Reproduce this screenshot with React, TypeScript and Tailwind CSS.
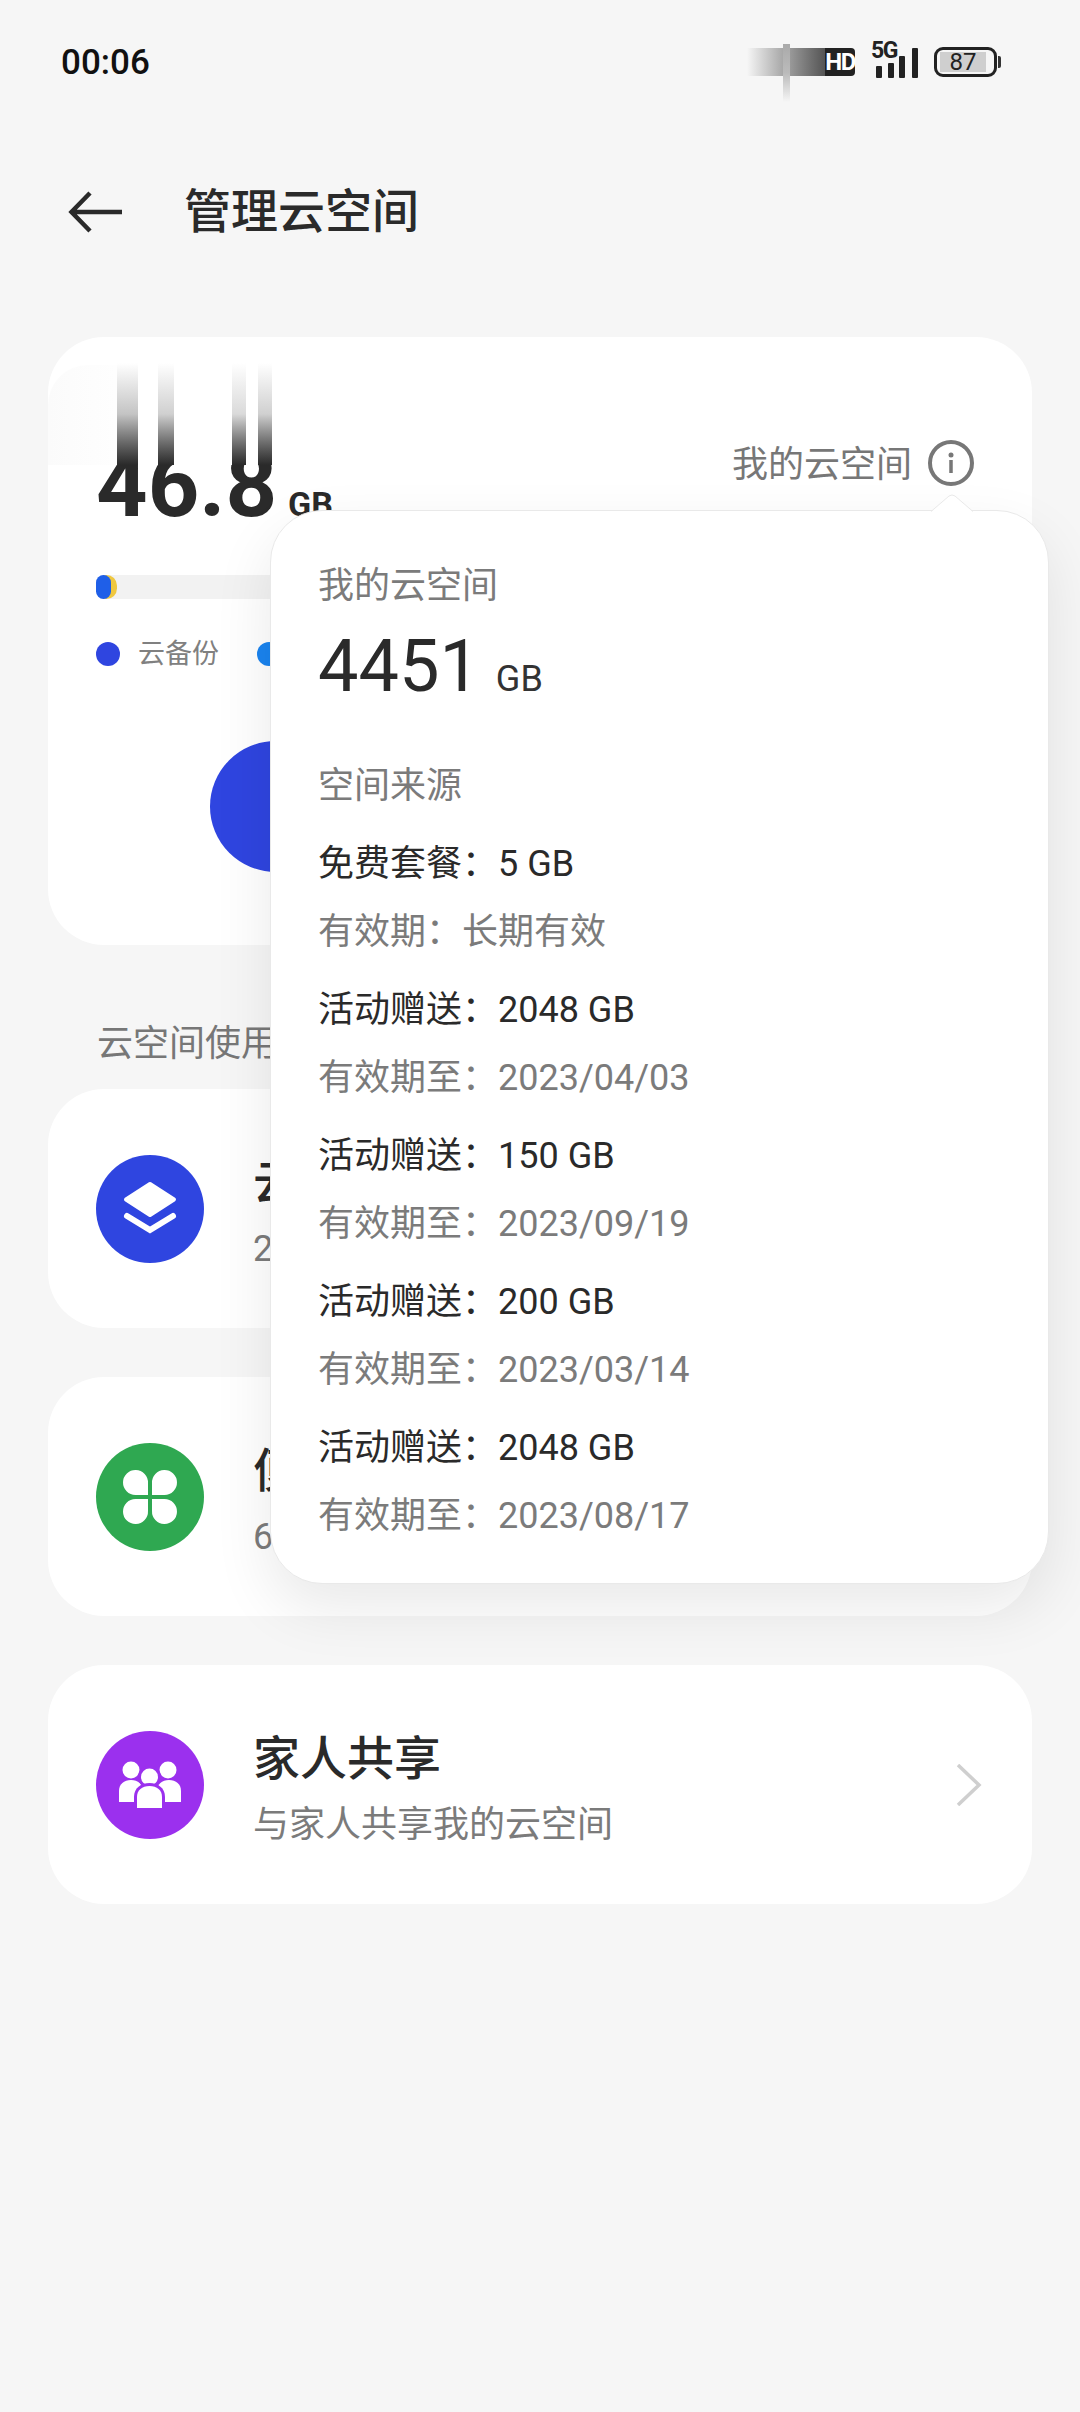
import { ReactNode } from "react";

const grants = [
  { source: "免费套餐：5 GB", expiry: "有效期：长期有效" },
  { source: "活动赠送：2048 GB", expiry: "有效期至：2023/04/03" },
  { source: "活动赠送：150 GB", expiry: "有效期至：2023/09/19" },
  { source: "活动赠送：200 GB", expiry: "有效期至：2023/03/14" },
  { source: "活动赠送：2048 GB", expiry: "有效期至：2023/08/17" },
];

// Smeared digit tops above the 46.8 reading.
const streaks = [
  "left-[69px] w-[21px] via-[#c4c4c4]",
  "left-[110px] w-[16px] via-[#d0d0d0]",
  "left-[184px] w-[14px] via-[#dadada]",
  "left-[210px] w-[14px] via-[#d0d0d0]",
];

function LayersIcon() {
  return (
    <svg viewBox="0 0 108 108" className="size-full">
      <path d="M54 29 L78 44.5 L54 60 L30 44.5 Z" fill="#fff" stroke="#fff" strokeWidth="4" strokeLinejoin="round" />
      <path d="M31 61 L54 75 L77 61" fill="none" stroke="#fff" strokeWidth="6" strokeLinecap="round" strokeLinejoin="miter" />
    </svg>
  );
}

function CloverIcon() {
  return (
    <svg viewBox="0 0 108 108" className="size-full" fill="#fff">
      <path d="M52 40 A12.5 12.5 0 1 0 39.5 52 H52 Z" />
      <path d="M56 40 A12.5 12.5 0 1 1 68.5 52 H56 Z" />
      <path d="M52 68 A12.5 12.5 0 1 1 39.5 56 H52 Z" />
      <path d="M56 68 A12.5 12.5 0 1 0 68.5 56 H56 Z" />
    </svg>
  );
}

function FamilyIcon() {
  return (
    <svg viewBox="0 0 108 108" className="size-full" fill="#fff">
      <circle cx="35" cy="39" r="8.5" />
      <circle cx="72" cy="39" r="8.5" />
      <path d="M23 71 V60 C23 53 28 49 35 49 C42 49 47 53 47 60 V71 Z" />
      <path d="M61 71 V60 C61 53 66 49 73 49 C80 49 85 53 85 60 V71 Z" />
      <circle cx="53.5" cy="46" r="11.5" fill="#9b30ee" />
      <circle cx="53.5" cy="46" r="8.5" />
      <path d="M38 80 V66 C38 57 45 52 53.5 52 C62 52 69 57 69 66 V80 Z" fill="#9b30ee" />
      <path d="M41 77 V66 C41 59 46 55 53.5 55 C61 55 66 59 66 66 V77 Z" />
    </svg>
  );
}

function FeatureCard({
  color,
  icon,
  title,
  subtitle,
}: {
  color: string;
  icon: ReactNode;
  title: string;
  subtitle: string;
}) {
  return (
    <div className="mx-12 flex h-[239px] items-center rounded-[56px] bg-white pr-[50px] pl-12">
      <div className={`size-[108px] shrink-0 rounded-full ${color}`}>{icon}</div>
      <div className="ml-[49px] flex-1 pt-[9px]">
        <div className="text-[47px] leading-[60px] font-medium text-[#2a2a2a]">{title}</div>
        <div className="mt-[11px] text-[36px] leading-[50px] text-[#7b7b7b]">{subtitle}</div>
      </div>
      <svg viewBox="0 0 26 42" className="h-[42px] w-[26px]" fill="none" stroke="#cfcfcf" strokeWidth="3.5">
        <path d="M2 1 L23 21 L2 41" />
      </svg>
    </div>
  );
}

function StatusBar() {
  return (
    <div className="relative flex h-[124px] items-center pr-[79px] pl-[61px]">
      <span className="mt-[2px] text-[35px] font-medium text-[#111]">00:06</span>
      <div className="ml-auto flex h-[30px] items-center">
        <div className="h-[28px] w-[78px] bg-linear-to-r from-[#f6f6f6] to-[#555]" />
        <div className="flex h-[28px] w-[30px] items-center justify-center rounded-r-[4px] bg-[#222] text-[24px] font-bold tracking-[-1.5px] text-white">
          HD
        </div>
        <div className="relative ml-[17px] h-[32px] w-[46px]">
          <span className="absolute top-[-7px] left-[-1px] text-[23px] leading-[24px] font-bold tracking-[-1.5px] text-[#222]">5G</span>
          <div className="absolute bottom-0 left-[4px] h-[12px] w-[6px] rounded-[1px] bg-[#222]" />
          <div className="absolute bottom-0 left-[16px] h-[15px] w-[6px] rounded-[1px] bg-[#222]" />
          <div className="absolute bottom-0 left-[27px] h-[22px] w-[6px] rounded-[1px] bg-[#222]" />
          <div className="absolute bottom-0 left-[40px] h-[30px] w-[6px] rounded-[1px] bg-[#222]" />
        </div>
        <div className="ml-[16px] flex h-[30px] w-[63px] items-center rounded-[9px] border-[3px] border-[#222] px-[3px]">
          <div className="flex h-[20px] w-[46px] items-center justify-center bg-[#cfcfcf] text-[24px] text-[#222]">87</div>
        </div>
        <div className="ml-[1px] h-[12px] w-[3px] rounded-r-[2px] bg-[#333]" />
      </div>
      <div className="absolute top-[44px] left-[783px] h-[58px] w-[7px] bg-linear-to-b from-[#aaa] via-[#bbb] to-[#f6f6f6]" />
    </div>
  );
}

export default function App() {
  return (
    <div className="relative h-[2412px] w-[1080px] overflow-hidden bg-[#f6f6f6] font-[Roboto,'Noto_Sans_CJK_SC',sans-serif]">
      <StatusBar />

      <div className="flex h-[176px] items-center pl-[68px]">
        <svg viewBox="0 0 56 42" className="h-[42px] w-[56px]" fill="none" stroke="#2a2a2a" strokeWidth="4.5">
          <path d="M54 21 H4 M22 2 L3.5 21 L22 40" />
        </svg>
        <h1 className="ml-[60px] text-[47px] font-medium text-[#2a2a2a]">管理云空间</h1>
      </div>

      <div className="relative mx-12 mt-[37px] h-[608px] rounded-[56px] bg-white px-12 pt-[101px]">
        <div className="flex items-start justify-between pr-[10px]">
          <div className="mt-[3px] flex items-baseline font-bold text-[#2a2a2a]">
            <span className="text-[90px] leading-[90px]">46.8</span>
            <span className="ml-[11px] text-[34px]">GB</span>
          </div>
          <div className="flex items-center text-[36px] leading-[50px] text-[#777]">
            <span className="mt-[2px]">我的云空间</span>
            <svg viewBox="0 0 46 46" className="mt-[-3px] ml-[16px] size-[46px]">
              <circle cx="23" cy="23" r="21" fill="none" stroke="#777" strokeWidth="4" />
              <circle cx="23" cy="15" r="2.5" fill="#777" />
              <rect x="21.25" y="20" width="3.5" height="13" fill="#777" />
            </svg>
          </div>
        </div>

        <div className="relative mt-[44px] h-[24px] rounded-full bg-[#f2f2f2]">
          <div className="absolute top-0 left-0 h-[24px] w-[21px] rounded-full bg-[#f0c840]" />
          <div className="absolute top-0 left-0 h-[24px] w-[15px] rounded-full bg-[#1f5fe8]" />
        </div>

        <div className="mt-[37px] flex items-center text-[27px] leading-[36px] text-[#808080]">
          <div className="size-[24px] rounded-full bg-[#2f45e0]" />
          <span className="ml-[18px]">云备份</span>
          <div className="ml-[38px] size-[24px] rounded-full bg-[#1a84f0]" />
        </div>

        <div className="mt-[69px] ml-[114px] size-[131px] rounded-full bg-[#2f45e0]" />

        <div className="absolute top-[28px] left-0 h-[100px] w-[300px] rounded-tl-[40px] bg-linear-to-r from-[#fbfbfb] to-white to-30%" />
        {streaks.map((s) => (
          <div
            key={s}
            className={`absolute top-[26px] h-[102px] bg-linear-to-b from-white to-[#2a2a2a] ${s}`}
          />
        ))}
      </div>

      <div className="mt-[74px] mb-[20px] pl-[97px] text-[36px] leading-[50px] text-[#777]">云空间使用情况</div>

      <div className="flex flex-col gap-[49px]">
        <FeatureCard color="bg-[#2f45e0]" icon={<LayersIcon />} title="云备份" subtitle="21.3 GB" />
        <FeatureCard color="bg-[#2fa851]" icon={<CloverIcon />} title="便签" subtitle="64 MB" />
        <FeatureCard color="bg-[#9b30ee]" icon={<FamilyIcon />} title="家人共享" subtitle="与家人共享我的云空间" />
      </div>

      {/* Popover opened from the info icon */}
      <div className="absolute top-[510px] left-[270px] h-[1074px] w-[779px] rounded-[52px] border border-[#e9e9e9] bg-white pt-[50px] pl-[47px] shadow-[0_24px_60px_rgba(0,0,0,0.09)]">
        <svg viewBox="0 0 42 18" className="absolute top-[-17px] left-[660px] h-[18px] w-[42px]">
          <path d="M0 18 L18 2 Q21 0 24 2 L42 18 Z" fill="#fff" />
          <path d="M0 17.5 L18 2 Q21 0 24 2 L42 17.5" fill="none" stroke="#e9e9e9" strokeWidth="1" />
        </svg>
        <div className="text-[36px] leading-[50px] text-[#7b7b7b]">我的云空间</div>
        <div className="mt-[11px] flex items-baseline leading-[90px] text-[#2a2a2a]">
          <span className="text-[72px]">4451</span>
          <span className="ml-[16px] text-[36px] text-[#333]">GB</span>
        </div>
        <div className="mt-[37px] text-[36px] leading-[50px] text-[#7b7b7b]">空间来源</div>
        {grants.map((g, i) => (
          <div key={i} className="mt-[28px]">
            <div className="text-[36px] leading-[50px] text-[#2a2a2a]">{g.source}</div>
            <div className="mt-[18px] text-[36px] leading-[50px] text-[#7b7b7b]">{g.expiry}</div>
          </div>
        ))}
      </div>
    </div>
  );
}
